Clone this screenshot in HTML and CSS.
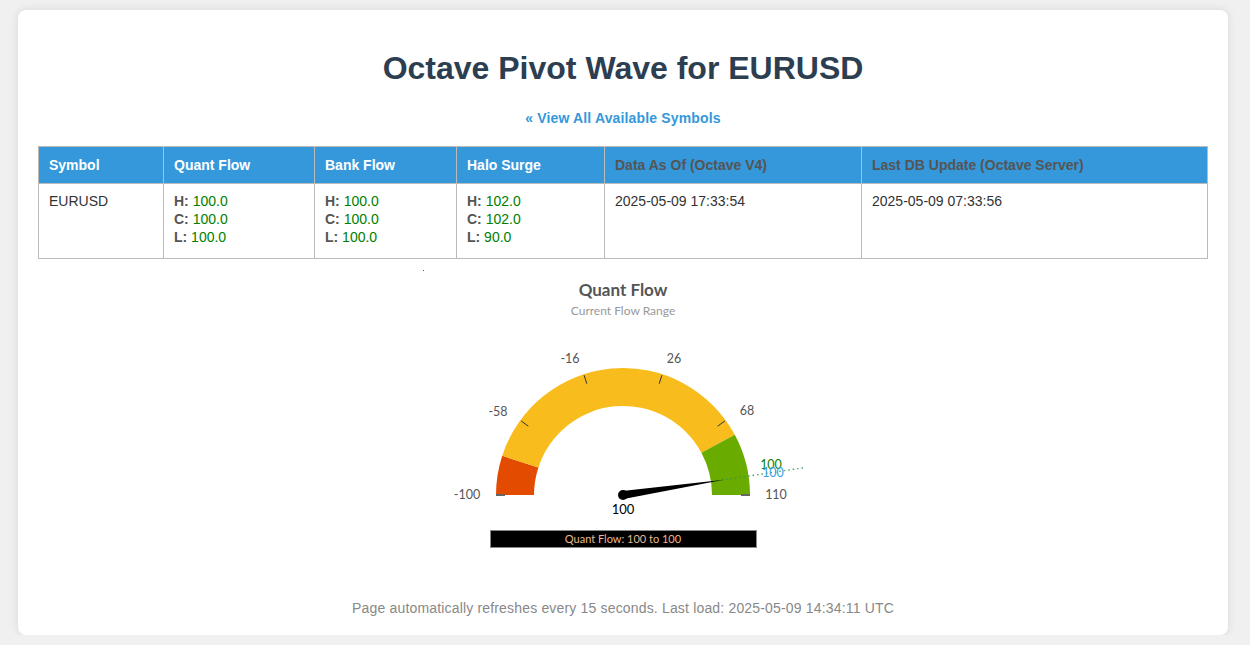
FILE: index.html
```html
<!DOCTYPE html>
<html>
<head>
<meta charset="utf-8">
<title>Octave Pivot Wave for EURUSD</title>
<link rel="stylesheet" href="styles.css">
</head>
<body>
<div class="card">
  <h1 class="title">Octave Pivot Wave for EURUSD</h1>
  <div class="nav"><a class="back" href="#">« View All Available Symbols</a></div>
  <table class="data">
    <thead>
      <tr>
        <th class="c1">Symbol</th>
        <th class="c2">Quant Flow</th>
        <th class="c3">Bank Flow</th>
        <th class="c4">Halo Surge</th>
        <th class="c5 dim">Data As Of (Octave V4)</th>
        <th class="c6 dim">Last DB Update (Octave Server)</th>
      </tr>
    </thead>
    <tbody>
      <tr>
        <td>EURUSD</td>
        <td><span class="k">H:</span> <span class="v">100.0</span><br><span class="k">C:</span> <span class="v">100.0</span><br><span class="k">L:</span> <span class="v">100.0</span></td>
        <td><span class="k">H:</span> <span class="v">100.0</span><br><span class="k">C:</span> <span class="v">100.0</span><br><span class="k">L:</span> <span class="v">100.0</span></td>
        <td><span class="k">H:</span> <span class="v">102.0</span><br><span class="k">C:</span> <span class="v">102.0</span><br><span class="k">L:</span> <span class="v">90.0</span></td>
        <td>2025-05-09 17:33:54</td>
        <td>2025-05-09 07:33:56</td>
      </tr>
    </tbody>
  </table>
  <div class="gauge-wrap">
    <svg class="gauge" width="400" height="290" viewBox="0 0 400 290">
      <rect x="0" y="1" width="1" height="1" fill="#555"/>
      <text class="g-title" x="200" y="27">Quant Flow</text>
      <text class="g-sub" x="200" y="46">Current Flow Range</text>
      <path d="M73 226 A127 127 0 0 1 79.2 186.8 L115.4 198.5 A89 89 0 0 0 111 226 Z" fill="#e34b00"/>
      <path d="M79.2 186.8 A127 127 0 0 1 311.8 165.8 L278.4 183.8 A89 89 0 0 0 115.4 198.5 Z" fill="#f8bd1c"/>
      <path d="M311.8 165.8 A127 127 0 0 1 327 226 L289 226 A89 89 0 0 0 278.4 183.8 Z" fill="#6aab00"/>
      <g stroke="#333" stroke-width="1">
        <line x1="98.1" y1="151.9" x2="105.3" y2="157.2"/>
        <line x1="161.1" y1="106.2" x2="163.8" y2="114.7"/>
        <line x1="238.9" y1="106.2" x2="236.2" y2="114.7"/>
        <line x1="301.9" y1="151.9" x2="294.7" y2="157.2"/>
      </g>
      <g stroke="#666" stroke-width="2">
        <line x1="73" y1="226" x2="82" y2="226"/>
        <line x1="318" y1="226" x2="327" y2="226"/>
      </g>
      <g class="g-lbl">
        <text x="44" y="230">-100</text>
        <text x="75" y="147">-58</text>
        <text x="147" y="94">-16</text>
        <text x="251" y="94">26</text>
        <text x="324" y="146">68</text>
        <text x="353" y="230">110</text>
      </g>
      <line x1="294" y1="211.8" x2="383" y2="198.4" stroke="#2f9a4a" stroke-width="1.2" stroke-dasharray="1.5 3"/>
      <text class="g-val green" x="348" y="200">100</text>
      <text class="g-val blue" x="350" y="208">100</text>
      <polygon points="300.9,210.8 200.6,230 198.8,226.2 199.4,222" fill="#000"/>
      <circle cx="200" cy="226" r="5" fill="#000"/>
      <text class="g-center" x="200" y="245">100</text>
      <rect x="67.5" y="261.5" width="266" height="17" fill="#000" stroke="#888" stroke-width="1"/>
      <text class="g-bar" x="200" y="274">Quant Flow: 100 to 100</text>
    </svg>
  </div>
  <p class="footer">Page automatically refreshes every 15 seconds. Last load: 2025-05-09 14:34:11 UTC</p>
</div>
</body>
</html>
```
FILE: styles.css
```css
html, body {
  margin: 0;
  padding: 0;
}
body {
  background: #f0f0f0;
  font-family: "Liberation Sans", Arial, sans-serif;
  color: #333;
}
.card {
  width: 1170px;
  margin: 10px 0 0 18px;
  padding: 20px 20px 19px 20px;
  background: #fff;
  border-radius: 8px;
  box-shadow: 0 0 10px rgba(0, 0, 0, 0.1);
}
.title {
  margin: 20px 0 0 0;
  text-align: center;
  font-size: 32px;
  line-height: 37px;
  font-weight: bold;
  color: #2c3e50;
}
.nav {
  margin-top: 23px;
  text-align: center;
  font-size: 14px;
  line-height: 16px;
}
.back {
  color: #3498db;
  font-weight: bold;
  text-decoration: none;
  letter-spacing: 0.15px;
}
.data {
  margin-top: 20px;
  width: 1170px;
  border-collapse: collapse;
  font-size: 14px;
}
.data th {
  background: #3498db;
  color: #fff;
  font-weight: bold;
  text-align: left;
  padding: 10px 10px;
  line-height: 16px;
  border: 1px solid #bbb;
}
.data th.dim {
  color: #555;
}
.data td {
  padding: 8px 10px 12px 10px;
  line-height: 18px;
  vertical-align: top;
  border: 1px solid #bbb;
  color: #333;
}
.c1 { width: 104px; }
.c2 { width: 130px; }
.c3 { width: 121px; }
.c4 { width: 127px; }
.c5 { width: 236px; }
.c6 { width: auto; }
.k {
  color: #555;
  font-weight: bold;
}
.v {
  color: #008000;
}
.gauge-wrap {
  margin-top: 10px;
  display: flex;
  justify-content: center;
}
.gauge {
  display: block;
  font-family: Lato, "Open Sans", sans-serif;
}
.g-title {
  font-size: 17px;
  font-weight: bold;
  fill: #555;
  text-anchor: middle;
}
.g-sub {
  font-size: 12px;
  fill: #999;
  text-anchor: middle;
}
.g-lbl text {
  font-size: 12.5px;
  fill: #555;
  text-anchor: middle;
}
.g-val {
  font-size: 12.5px;
  text-anchor: middle;
}
.green { fill: #0a7f00; }
.blue { fill: #3aa0e6; }
.g-center {
  font-size: 13px;
  fill: #000;
  text-anchor: middle;
}
.g-bar {
  font-size: 11px;
  fill: #eab88e;
  text-anchor: middle;
}
.footer {
  margin: 41px 0 0 0;
  text-align: center;
  font-size: 14px;
  line-height: 16px;
  color: #888;
  letter-spacing: 0.17px;
}
```
